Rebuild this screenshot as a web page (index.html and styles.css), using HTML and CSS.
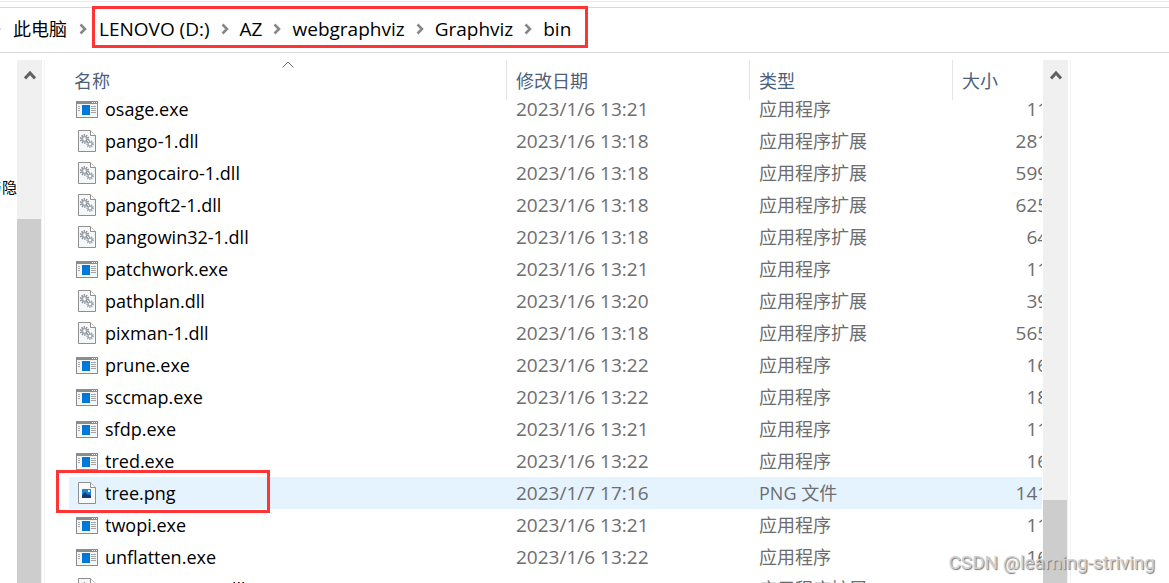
FILE: index.html
```html
<!DOCTYPE html>
<html lang="zh-CN">
<head>
  <meta charset="UTF-8">
  <meta name="viewport" content="width=device-width, initial-scale=1.0">
  <title>bin</title>
  <link rel="stylesheet" href="styles.css">
</head>
<body>
  <!-- Shared icons -->
  <svg class="sprite" aria-hidden="true">
    <symbol id="icon-exe" viewBox="0 0 22 17">
      <rect x="0.5" y="0.5" width="21" height="16" fill="#f6f6f6" stroke="#8a8d8f"/>
      <rect width="22" height="3" fill="#8a8d8f"/>
      <path d="M16 1h1v1h-1zM18 1h1v1h-1zM20 1h1v1h-1z" fill="#fff"/>
      <rect x="6" y="4" width="8" height="10" fill="#0078d7"/>
      <path d="M2 5.5h2M2 7.5h2M2 9.5h2M15 5.5h5M15 7.5h5M15 9.5h5M15 11.5h5" stroke="#a0a4a8"/>
    </symbol>
    <symbol id="icon-dll" viewBox="0 0 18 22">
      <path d="M0.500 0.500H12.500L17.500 5.500V21.500H0.500Z" fill="#f7f7f7" stroke="#8f8f8f"/>
      <path d="M12.500 0.500V5.500H17.500" fill="#fff" stroke="#8f8f8f"/>
      <circle cx="6.500" cy="9" r="3.700" fill="none" stroke="#8a9299" stroke-width="2" stroke-dasharray="1.400 0.900"/>
      <circle cx="6.500" cy="9" r="2.500" fill="#d5dade" stroke="#8a9299"/>
      <circle cx="6.500" cy="9" r="1" fill="#fff"/>
      <circle cx="12" cy="14" r="3" fill="none" stroke="#8a9aa5" stroke-width="1.500" stroke-dasharray="1.200 0.900"/>
      <circle cx="12" cy="14" r="2" fill="#e2e8ec" stroke="#8a9aa5"/>
      <circle cx="12" cy="14" r="1" fill="#fff"/>
    </symbol>
    <symbol id="icon-png" viewBox="0 0 18 22">
      <path d="M0.500 0.500H12.500L17.500 5.500V21.500H0.500Z" fill="#f9f9f9" stroke="#8f8f8f"/>
      <path d="M12.500 0.500V5.500H17.500" fill="#fff" stroke="#8f8f8f"/>
      <rect x="4" y="7" width="9" height="9" fill="#1f83d6"/>
      <path d="M4 13L7 10L10 13L11 12L13 14V16H4Z" fill="#123a75"/>
      <rect x="10" y="8" width="2" height="2" fill="#fff"/>
    </symbol>
    <symbol id="icon-right" viewBox="0 0 8 12">
      <path d="M1.500 1.500L6 6L1.500 10.500" fill="none" stroke="#868686" stroke-width="2.500"/>
    </symbol>
    <symbol id="icon-up" viewBox="0 0 12 10">
      <path d="M1 8.500L6 3L11 8.500" fill="none" stroke="#606060" stroke-width="3"/>
    </symbol>
    <symbol id="icon-sort" viewBox="0 0 12 7">
      <path d="M0.500 6.500L6 1L11.500 6.500" fill="none" stroke="#6f6f6f"/>
    </symbol>
  </svg>

  <header class="address-bar">
    <nav class="breadcrumb" aria-label="地址">
      <svg class="chevron"><use href="#icon-right"/></svg>
      <a href="#">此电脑</a>
      <svg class="chevron"><use href="#icon-right"/></svg>
      <div class="crumb-path">
        <a href="#">LENOVO (D:)</a>
        <svg class="chevron"><use href="#icon-right"/></svg>
        <a href="#">AZ</a>
        <svg class="chevron"><use href="#icon-right"/></svg>
        <a href="#">webgraphviz</a>
        <svg class="chevron"><use href="#icon-right"/></svg>
        <a href="#">Graphviz</a>
        <svg class="chevron"><use href="#icon-right"/></svg>
        <a href="#">bin</a>
      </div>
    </nav>
  </header>

  <main class="explorer">
    <aside class="tree-pane"><span>与隐</span></aside>
    <div class="scrollbar scrollbar-tree">
      <button type="button" aria-label="向上滚动"><svg><use href="#icon-up"/></svg></button>
      <div class="space"></div>
      <div class="thumb"></div>
    </div>

    <section class="file-pane">
      <table class="files">
        <colgroup>
          <col class="col-name">
          <col class="col-date">
          <col class="col-type">
          <col class="col-size">
        </colgroup>
        <thead>
          <tr>
            <th>名称<svg class="sort"><use href="#icon-sort"/></svg></th>
            <th>修改日期</th>
            <th>类型</th>
            <th>大小</th>
          </tr>
        </thead>
        <tbody>
          <tr><td><div class="file"><svg class="exe"><use href="#icon-exe"/></svg>osage.exe</div></td><td class="num">2023/1/6 13:21</td><td>应用程序</td><td class="num">11 KB</td></tr>
          <tr><td><div class="file"><svg class="doc"><use href="#icon-dll"/></svg>pango-1.dll</div></td><td class="num">2023/1/6 13:18</td><td>应用程序扩展</td><td class="num">281 KB</td></tr>
          <tr><td><div class="file"><svg class="doc"><use href="#icon-dll"/></svg>pangocairo-1.dll</div></td><td class="num">2023/1/6 13:18</td><td>应用程序扩展</td><td class="num">599 KB</td></tr>
          <tr><td><div class="file"><svg class="doc"><use href="#icon-dll"/></svg>pangoft2-1.dll</div></td><td class="num">2023/1/6 13:18</td><td>应用程序扩展</td><td class="num">625 KB</td></tr>
          <tr><td><div class="file"><svg class="doc"><use href="#icon-dll"/></svg>pangowin32-1.dll</div></td><td class="num">2023/1/6 13:18</td><td>应用程序扩展</td><td class="num">64 KB</td></tr>
          <tr><td><div class="file"><svg class="exe"><use href="#icon-exe"/></svg>patchwork.exe</div></td><td class="num">2023/1/6 13:21</td><td>应用程序</td><td class="num">11 KB</td></tr>
          <tr><td><div class="file"><svg class="doc"><use href="#icon-dll"/></svg>pathplan.dll</div></td><td class="num">2023/1/6 13:20</td><td>应用程序扩展</td><td class="num">39 KB</td></tr>
          <tr><td><div class="file"><svg class="doc"><use href="#icon-dll"/></svg>pixman-1.dll</div></td><td class="num">2023/1/6 13:18</td><td>应用程序扩展</td><td class="num">565 KB</td></tr>
          <tr><td><div class="file"><svg class="exe"><use href="#icon-exe"/></svg>prune.exe</div></td><td class="num">2023/1/6 13:22</td><td>应用程序</td><td class="num">16 KB</td></tr>
          <tr><td><div class="file"><svg class="exe"><use href="#icon-exe"/></svg>sccmap.exe</div></td><td class="num">2023/1/6 13:22</td><td>应用程序</td><td class="num">18 KB</td></tr>
          <tr><td><div class="file"><svg class="exe"><use href="#icon-exe"/></svg>sfdp.exe</div></td><td class="num">2023/1/6 13:21</td><td>应用程序</td><td class="num">11 KB</td></tr>
          <tr><td><div class="file"><svg class="exe"><use href="#icon-exe"/></svg>tred.exe</div></td><td class="num">2023/1/6 13:22</td><td>应用程序</td><td class="num">16 KB</td></tr>
          <tr class="selected"><td><div class="file"><svg class="doc"><use href="#icon-png"/></svg>tree.png</div></td><td class="num">2023/1/7 17:16</td><td>PNG 文件</td><td class="num">141 KB</td></tr>
          <tr><td><div class="file"><svg class="exe"><use href="#icon-exe"/></svg>twopi.exe</div></td><td class="num">2023/1/6 13:21</td><td>应用程序</td><td class="num">11 KB</td></tr>
          <tr><td><div class="file"><svg class="exe"><use href="#icon-exe"/></svg>unflatten.exe</div></td><td class="num">2023/1/6 13:22</td><td>应用程序</td><td class="num">16 KB</td></tr>
          <tr><td><div class="file"><svg class="doc"><use href="#icon-dll"/></svg>vcruntime140.dll</div></td><td class="num">2020/7/17 15:10</td><td>应用程序扩展</td><td class="num">101 KB</td></tr>
        </tbody>
      </table>
    </section>

    <div class="scrollbar scrollbar-files">
      <button type="button" aria-label="向上滚动"><svg><use href="#icon-up"/></svg></button>
      <div class="space"></div>
      <div class="thumb"></div>
    </div>
    <aside class="preview-pane"></aside>
  </main>

  <div class="watermark">CSDN @learning-striving</div>
</body>
</html>
```
FILE: styles.css
```css
:root {
  --text: #000;
  --text-light: #6d6d6d;
  --heading: #4c607a;
  --line: #d9d9d9;
  --track: #f0f0f0;
  --thumb: #cdcdcd;
  --selected: #e5f3ff;
  --mark: #ff3535;
}

*,
*::before,
*::after {
  box-sizing: border-box;
  margin: 0;
  padding: 0;
}

body {
  display: flex;
  flex-direction: column;
  height: 100vh;
  overflow: hidden;
  position: relative;
  background: #fff;
  color: var(--text);
  font-family: "Open Sans", "Noto Sans CJK SC", sans-serif;
  font-size: 18px;
  line-height: 24px;
}

.sprite {
  display: none;
}

/* Address bar */
.address-bar {
  margin-top: 1px;
  padding-top: 5px;
  border-top: 1px solid #e9e9e9;
}

.breadcrumb {
  display: flex;
  align-items: center;
  gap: 12px;
  height: 46px;
  margin-left: -7px;
  padding-bottom: 2px;
  border-top: 1px solid var(--line);
  border-bottom: 1px solid var(--line);
  white-space: nowrap;
}

.breadcrumb a {
  color: inherit;
  text-decoration: none;
}

.chevron {
  flex: none;
  width: 8px;
  height: 12px;
}

.crumb-path {
  display: flex;
  align-items: center;
  gap: 11px;
  position: relative;
  font-size: 19px;
}

.crumb-path::after {
  content: "";
  position: absolute;
  inset: -11px -17px -7px -7px;
  border: 3px solid var(--mark);
}

/* Panes */
.explorer {
  display: flex;
  flex: 1;
  min-height: 0;
  padding-top: 7px;
}

.tree-pane {
  display: flex;
  justify-content: flex-end;
  width: 17px;
  padding-top: 115px;
  overflow: hidden;
  font-size: 15px;
  white-space: nowrap;
}

.scrollbar {
  display: flex;
  flex-direction: column;
  flex: none;
  width: 25px;
  background: var(--track);
}

.scrollbar button {
  height: 30px;
  border: none;
  background: none;
}

.scrollbar svg {
  display: block;
  width: 12px;
  height: 10px;
  margin: 0 auto;
}

.space {
  flex: 129;
}

.thumb {
  flex: 364;
  margin-right: 1px;
  background: var(--thumb);
}

.scrollbar-files .space {
  flex: 410;
}

.scrollbar-files .thumb {
  flex: 83;
}

.file-pane {
  flex: 1;
  min-width: 0;
  margin: 0 1px 0 2px;
  padding-left: 24px;
  border-left: 1px solid #f3f3f3;
  overflow: hidden;
}

.preview-pane {
  flex: none;
  width: 99px;
  margin-left: 2px;
  border-left: 1px solid #f3f3f3;
}

/* File list */
.files {
  width: 1018px;
  table-layout: fixed;
  border-collapse: collapse;
}

.col-name {
  width: 437px;
}

.col-date {
  width: 243px;
}

.col-type {
  width: 203px;
}

.files th {
  position: relative;
  height: 33px;
  padding: 8px 10px 0;
  color: var(--heading);
  font-weight: 400;
  text-align: left;
}

.files th:first-child {
  padding-left: 5px;
}

.files th + th::before {
  content: "";
  position: absolute;
  top: 0;
  left: 0;
  width: 1px;
  height: 40px;
  background: #e5e5e5;
}

.sort {
  position: absolute;
  top: 1px;
  left: 50%;
  width: 12px;
  height: 7px;
  transform: translateX(-50%);
}

.files td {
  height: 32px;
  padding: 0 10px;
  color: var(--text-light);
  white-space: nowrap;
}

.files td:first-child {
  position: relative;
  padding: 0 7px;
  color: var(--text);
}

.files td:last-child {
  text-align: right;
}

.files .num {
  font-size: 19px;
}

.file {
  display: flex;
  align-items: center;
  gap: 7px;
}

.file svg {
  flex: none;
}

.exe {
  width: 22px;
  height: 17px;
}

.doc {
  width: 18px;
  height: 22px;
  margin: 0 2px;
}

.selected {
  background: var(--selected);
}

.selected td:first-child::after {
  content: "";
  position: absolute;
  top: -7px;
  left: -13px;
  width: 214px;
  height: 43px;
  border: 3px solid var(--mark);
}

.watermark {
  position: absolute;
  right: 14px;
  bottom: 8px;
  color: #d0d0d0;
  font-family: Roboto, sans-serif;
  font-size: 19px;
  text-shadow: 1px 1px 1px #777;
}
```
